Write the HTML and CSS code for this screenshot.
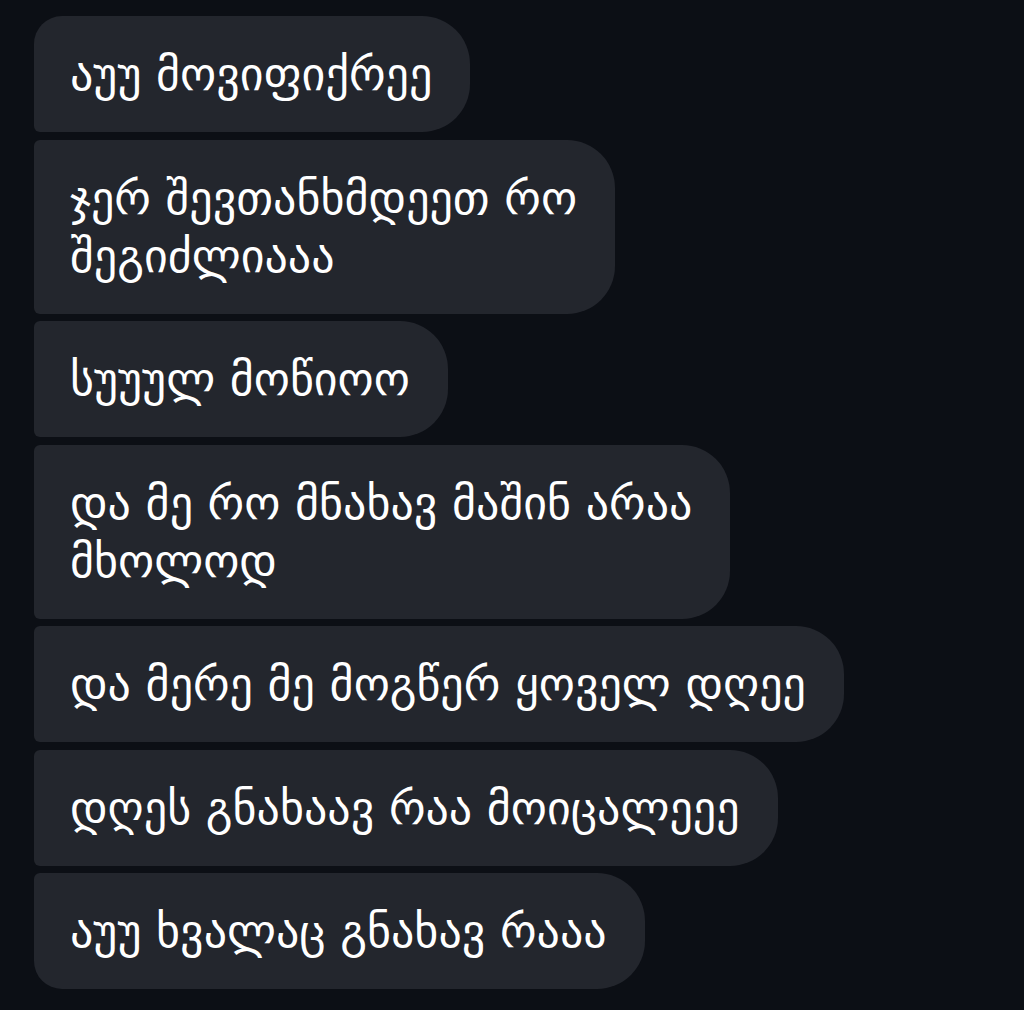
FILE: index.html
```html
<!DOCTYPE html>
<html lang="ka">
<head>
<meta charset="UTF-8">
<meta name="viewport" content="width=device-width, initial-scale=1.0">
<title>Chat</title>
<link rel="stylesheet" href="styles.css">
</head>
<body>

<div class="thread">
    <div class="bubble first">აუუ მოვიფიქრეე</div>
    <div class="bubble">ჯერ შევთანხმდეეთ რო<br>შეგიძლიააა</div>
    <div class="bubble">სუუულ მოწიოო</div>
    <div class="bubble">და მე რო მნახავ მაშინ არაა<br>მხოლოდ</div>
    <div class="bubble">და მერე მე მოგწერ ყოველ დღეე</div>
    <div class="bubble">დღეს გნახაავ რაა მოიცალეეე</div>
    <div class="bubble last">აუუ ხვალაც გნახავ რააა</div>
</div>

</body>
</html>
```

FILE: styles.css
```css
body {
    margin: 0;
    background-color: #0c0f15;
    font-family: "DejaVu Sans", "Noto Sans", sans-serif;
}

.thread {
    display: flex;
    flex-direction: column;
    align-items: flex-start;
    gap: 7.5px;
    padding: 16px 0 0 34px;
}

.bubble {
    background-color: #23262d;
    color: #ffffff;
    font-size: 46px;
    line-height: 58px;
    padding: 29px 38px 29px 36px;
    border-radius: 6px 48px 48px 6px;
}

.bubble.first {
    border-top-left-radius: 28px;
}

.bubble.last {
    border-bottom-left-radius: 28px;
}
```
